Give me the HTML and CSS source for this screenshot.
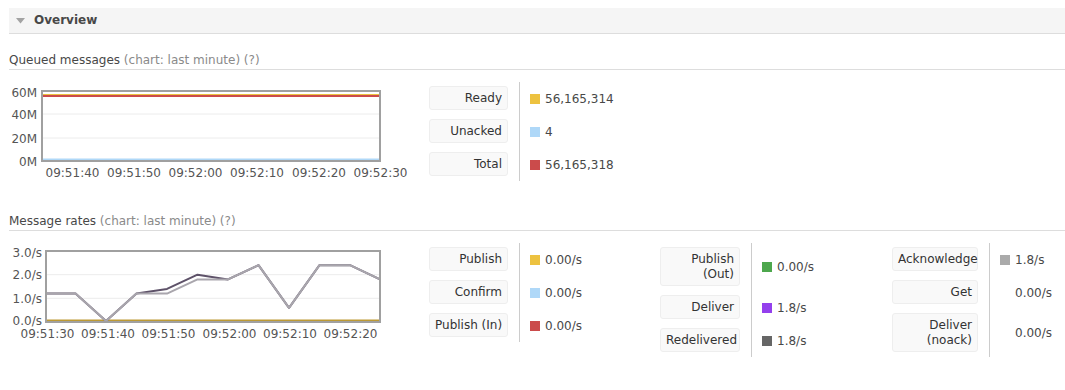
FILE: index.html
```html
<!DOCTYPE html>
<html lang="en">
<head>
    <meta charset="UTF-8">
    <title>Overview</title>
    <link rel="stylesheet" href="styles.css">
</head>
<body>
    <div class="section-head">
        <svg class="toggle" width="9" height="6" viewBox="0 0 9 6"><polygon points="0,0 9,0 4.5,5.5" fill="#a3a3a3"/></svg>
        <h2>Overview</h2>
    </div>

    <h3 class="chart-title">Queued messages <span class="muted">(chart: last minute) (?)</span></h3>
    <div class="chart-row">
        <div class="chart">
            <svg width="420" height="100" viewBox="0 0 420 100">
                <line x1="33" y1="33" x2="371" y2="33" class="grid"/>
                <line x1="33" y1="57" x2="371" y2="57" class="grid"/>
                <line x1="34" y1="14" x2="370" y2="14" stroke="#edc240" stroke-width="2"/>
                <line x1="34" y1="15" x2="370" y2="15" stroke="#cb4b4b" stroke-width="2"/>
                <line x1="34" y1="78.5" x2="370" y2="78.5" stroke="#afd8f8" stroke-width="2"/>
                <rect x="33" y="10" width="338" height="70" class="frame"/>
                <g class="ytick">
                    <text x="28" y="16">60M</text>
                    <text x="28" y="38">40M</text>
                    <text x="28" y="62">20M</text>
                    <text x="28" y="85">0M</text>
                </g>
                <g class="xtick">
                    <text x="63.5" y="96">09:51:40</text>
                    <text x="125" y="96">09:51:50</text>
                    <text x="186.5" y="96">09:52:00</text>
                    <text x="248" y="96">09:52:10</text>
                    <text x="310" y="96">09:52:20</text>
                    <text x="371.5" y="96">09:52:30</text>
                </g>
            </svg>
        </div>
        <div class="facts">
            <div class="fact-label"><span class="lbl w79">Ready</span></div>
            <div class="fact-value"><span class="swatch" style="background:#edc240"></span>56,165,314</div>
            <div class="fact-label"><span class="lbl w79">Unacked</span></div>
            <div class="fact-value"><span class="swatch" style="background:#afd8f8"></span>4</div>
            <div class="fact-label"><span class="lbl w79">Total</span></div>
            <div class="fact-value"><span class="swatch" style="background:#cb4b4b"></span>56,165,318</div>
        </div>
    </div>

    <h3 class="chart-title second">Message rates <span class="muted">(chart: last minute) (?)</span></h3>
    <div class="chart-row">
        <div class="chart">
            <svg width="420" height="100" viewBox="0 0 420 100">
                <line x1="37" y1="32.7" x2="371" y2="32.7" class="grid"/>
                <line x1="37" y1="56.3" x2="371" y2="56.3" class="grid"/>
                <line x1="38" y1="78.5" x2="370" y2="78.5" stroke="#bd9a34" stroke-width="2"/>
                <polyline class="series" stroke="#5e5269" points="37,51.6 66.5,51.6 97,79 127.5,51.6 158,46.9 188.5,32.7 219,37.4 249.5,23.2 280,65.8 310.5,23.2 341,23.2 371,37.4"/>
                <polyline class="series" stroke="#a9a6ad" points="37,51.6 66.5,51.6 97,79 127.5,51.6 158,51.6 188.5,37.4 219,37.4 249.5,23.2 280,65.8 310.5,23.2 341,23.2 371,37.4"/>
                <rect x="37" y="9" width="334" height="71" class="frame"/>
                <g class="ytick">
                    <text x="33" y="15">3.0/s</text>
                    <text x="33" y="37">2.0/s</text>
                    <text x="33" y="61">1.0/s</text>
                    <text x="33" y="83">0.0/s</text>
                </g>
                <g class="xtick">
                    <text x="38.5" y="96">09:51:30</text>
                    <text x="99" y="96">09:51:40</text>
                    <text x="159.5" y="96">09:51:50</text>
                    <text x="220.5" y="96">09:52:00</text>
                    <text x="281" y="96">09:52:10</text>
                    <text x="341.5" y="96">09:52:20</text>
                </g>
            </svg>
        </div>
        <div class="facts">
            <div class="fact-label"><span class="lbl w79">Publish</span></div>
            <div class="fact-value"><span class="swatch" style="background:#edc240"></span>0.00/s</div>
            <div class="fact-label"><span class="lbl w79">Confirm</span></div>
            <div class="fact-value"><span class="swatch" style="background:#afd8f8"></span>0.00/s</div>
            <div class="fact-label"><span class="lbl w79">Publish (In)</span></div>
            <div class="fact-value"><span class="swatch" style="background:#cb4b4b"></span>0.00/s</div>
        </div>
        <div class="facts">
            <div class="fact-label"><span class="lbl w80">Publish<br>(Out)</span></div>
            <div class="fact-value"><span class="swatch" style="background:#4da74d"></span>0.00/s</div>
            <div class="fact-label"><span class="lbl w80">Deliver</span></div>
            <div class="fact-value"><span class="swatch" style="background:#9440ed"></span>1.8/s</div>
            <div class="fact-label"><span class="lbl w80">Redelivered</span></div>
            <div class="fact-value"><span class="swatch" style="background:#666666"></span>1.8/s</div>
        </div>
        <div class="facts last">
            <div class="fact-label"><span class="lbl w86">Acknowledge</span></div>
            <div class="fact-value"><span class="swatch" style="background:#aaaaaa"></span>1.8/s</div>
            <div class="fact-label"><span class="lbl w86">Get</span></div>
            <div class="fact-value"><span class="swatch blank"></span>0.00/s</div>
            <div class="fact-label"><span class="lbl w86">Deliver<br>(noack)</span></div>
            <div class="fact-value"><span class="swatch blank"></span>0.00/s</div>
        </div>
    </div>
</body>
</html>
```

FILE: styles.css
```css
body {
    font-family: "DejaVu Sans", Verdana, sans-serif;
    font-size: 12px;
    color: #484848;
    margin: 8px 0 0 9px;
    padding: 0;
    overflow-x: hidden;
}
.section-head {
    display: flex;
    align-items: center;
    height: 25px;
    background-color: #f5f5f5;
    border-bottom: 1px solid #dddddd;
    padding-left: 7px;
}
.toggle {
    margin-right: 9px;
    margin-top: 1px;
}
.section-head h2 {
    font-size: 12px;
    font-weight: bold;
    margin: 0;
    color: #484848;
    line-height: 15px;
}
.chart-title {
    font-size: 12px;
    font-weight: normal;
    line-height: 16px;
    margin: 18px 0 0 0;
    padding: 0 0 1px 0;
    border-bottom: 1px solid #dddddd;
    color: #484848;
}
.chart-title.second {
    margin-top: 32px;
}
.muted {
    color: #8a8a8a;
}
.chart-row {
    display: flex;
    align-items: flex-start;
    margin-top: 11px;
}
.chart {
    width: 420px;
    height: 100px;
}
.chart svg {
    display: block;
}
.grid {
    stroke: #ececec;
    stroke-width: 1;
}
.frame {
    fill: none;
    stroke: #a0a0a0;
    stroke-width: 2;
}
.series {
    fill: none;
    stroke-width: 2;
    stroke-linejoin: round;
}
.ytick text {
    font-family: "DejaVu Sans", Verdana, sans-serif;
    font-size: 12px;
    fill: #555555;
    text-anchor: end;
}
.xtick text {
    font-family: "DejaVu Sans", Verdana, sans-serif;
    font-size: 12px;
    fill: #555555;
    text-anchor: middle;
}
.facts {
    display: grid;
    grid-template-columns: auto 141px;
    margin-top: 1px;
}
.facts.last {
    grid-template-columns: auto 80px;
}
.fact-label {
    padding: 4px 11px 5px 0;
}
.lbl {
    display: block;
    box-sizing: border-box;
    background-color: #f9f9f9;
    border: 1px solid #eeeeee;
    border-radius: 3px;
    padding: 4px 5px 3px 5px;
    line-height: 15px;
    text-align: right;
    white-space: nowrap;
    color: #333333;
}
.w79 { width: 79px; }
.w80 { width: 80px; }
.w86 { width: 86px; }
.fact-value {
    display: flex;
    align-items: center;
    border-left: 1px solid #cccccc;
    padding-left: 10px;
    color: #484848;
}
.swatch {
    display: inline-block;
    width: 10px;
    height: 10px;
    margin-right: 5px;
}
.swatch.blank {
    background: transparent;
}
```
